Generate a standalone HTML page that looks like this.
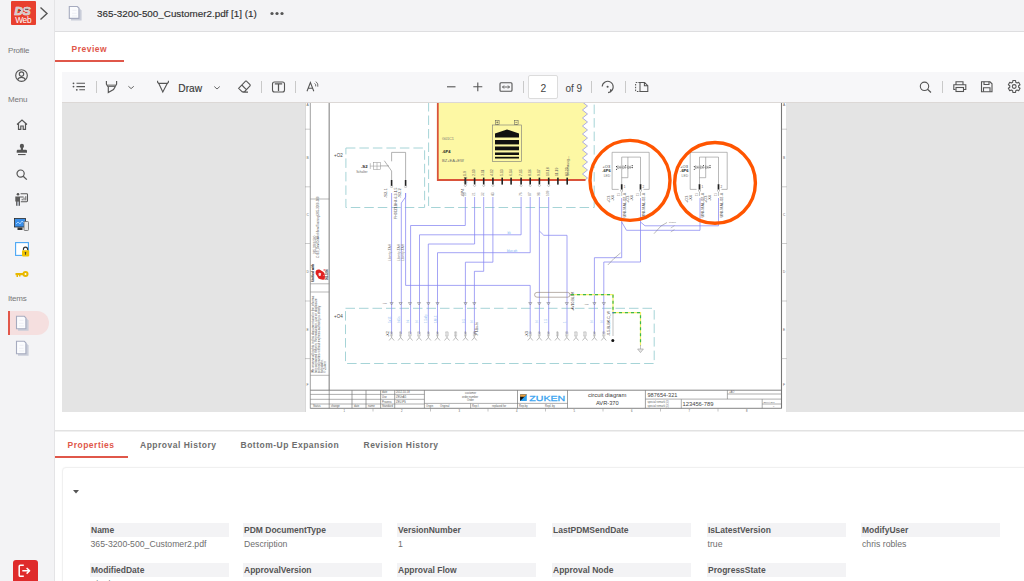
<!DOCTYPE html>
<html><head><meta charset="utf-8">
<style>
*{box-sizing:border-box;margin:0;padding:0}
html,body{width:1024px;height:581px;overflow:hidden;background:#fff;font-family:"Liberation Sans",sans-serif;color:#3a3a3a}
.abs{position:absolute}
#side{left:0;top:0;width:55px;height:581px;background:#f3f3f5;border-right:1px solid #e4e4e6}
.slab{position:absolute;left:8px;font-size:8px;letter-spacing:-0.2px;color:#777}
#hdr{left:55px;top:0;width:969px;height:32px;background:#f3f3f5;border-bottom:1px solid #dedee0}
#ttl{left:97px;top:7.6px;font-size:9.85px;color:#303030;-webkit-text-stroke:0.15px #303030;white-space:nowrap}
.tab{position:absolute;font-size:8.5px;font-weight:700;letter-spacing:0.5px;color:#6e6e6e;white-space:nowrap}
#tb{left:62px;top:72px;width:962px;height:31px;background:#f7f7f9;border-bottom:1px solid #dcd8d6}
#pdf{left:62px;top:103px;width:962px;height:309px;background:#e4e4e4;overflow:hidden}
.sep{position:absolute;width:1px;height:12px;top:81px;background:#c9c9c9}
.lbl{position:absolute;height:14px;width:139px;background:#f3f3f5;font-size:8.5px;font-weight:700;color:#555;padding-left:1px;line-height:14px}
.val{position:absolute;font-size:8.7px;color:#6e6e6e;white-space:nowrap}
svg{position:absolute;overflow:visible}
</style></head><body>

<!-- sidebar -->
<div id="side" class="abs">
  <div class="abs" style="left:11px;top:1px;width:25px;height:24px;background:#e8402f;border-radius:1px"></div>
  <svg style="left:11px;top:1px" width="25" height="24" viewBox="0 0 25 24">
    <text x="3.4" y="14" font-family="Liberation Sans" font-weight="700" font-style="italic" font-size="11.8" fill="#cfcfcf" stroke="#f2f2f2" stroke-width="0.7" paint-order="stroke" letter-spacing="-0.2">DS</text>
    <path d="M7.2 9.5 H10 M14 8.3 H17.3" stroke="#555" stroke-width="1"/>
    <text x="4.2" y="22.3" font-family="Liberation Sans" font-size="8.3" fill="#fff" letter-spacing="-0.3">Web</text>
  </svg>
  <svg style="left:39px;top:6px" width="10" height="15" viewBox="0 0 10 15"><path d="M1.5 1.5 L8 7.5 L1.5 13.5" fill="none" stroke="#555" stroke-width="1.4"/></svg>

  <div class="slab" style="top:46px">Profile</div>
  <svg style="left:15px;top:69px" width="13" height="13" viewBox="0 0 13 13"><circle cx="6.5" cy="6.5" r="5.8" fill="none" stroke="#555" stroke-width="1.15"/><circle cx="6.5" cy="5.1" r="2.2" fill="none" stroke="#555" stroke-width="1.15"/><path d="M2.6 10.8 Q3.5 8.3 6.5 8.3 Q9.5 8.3 10.4 10.8" fill="none" stroke="#555" stroke-width="1.15"/></svg>
  <div class="slab" style="top:95px">Menu</div>
  <svg style="left:16px;top:119px" width="12" height="11" viewBox="0 0 12 11"><path d="M1 5.5 L6 1 L11 5.5 M2.5 4.5 V10.3 H4.8 V7 H7.2 V10.3 H9.5 V4.5" fill="none" stroke="#555" stroke-width="1.2"/></svg>
  <svg style="left:15px;top:142px" width="14" height="15" viewBox="15 142 14 15"><path d="M21.9 143.8 Q24 143.8 24 146 Q24 147.3 23 148 V149.8 H25.8 Q27 149.8 27 151 V152.8 H16.7 V151 Q16.7 149.8 17.9 149.8 H20.8 V148 Q19.8 147.3 19.8 146 Q19.8 143.8 21.9 143.8 Z" fill="#555"/><rect x="18" y="154" width="7.6" height="1.1" fill="#555"/></svg>
  <svg style="left:16px;top:169px" width="12" height="11" viewBox="0 0 12 11"><circle cx="4.6" cy="4.6" r="3.6" fill="none" stroke="#555" stroke-width="1.2"/><path d="M7.2 7.2 L10.8 10.6" stroke="#555" stroke-width="1.3"/></svg>
  <svg style="left:13px;top:190px" width="17" height="17" viewBox="13 190 17 17"><circle cx="18" cy="194.2" r="1.3" fill="#555"/><path d="M15.3 196.4 H23.6 V197.6 H20 V205.7 H18.5 V201.5 H17.6 V205.7 H16.1 V201.5 H15.3 Z" fill="#5a5a5a"/><rect x="17.6" y="202" width="0.9" height="3.5" fill="#b8c4d8"/><path d="M20.6 193.7 H26.6 Q27.5 193.7 27.5 194.6 V200.8 Q27.5 201.7 26.6 201.7 H20.8" fill="none" stroke="#5a5a5a" stroke-width="1.05"/><path d="M22.2 200.4 V198.8 M24 200.4 V197.6 M25.8 200.4 V196.2" stroke="#5a5a5a" stroke-width="0.95"/></svg>
  <svg style="left:14px;top:218px" width="15" height="13" viewBox="0 0 15 13"><rect x="0.5" y="0.5" width="11" height="8.5" fill="#3a8ee8" stroke="#2a2a2a" stroke-width="0.8"/><path d="M2 6 L4 4 L6 6 L8 3 L10 5" stroke="#bfe0ff" stroke-width="0.8" fill="none"/><rect x="3.5" y="9.5" width="5" height="2.5" fill="#333"/><rect x="10" y="3.5" width="4.5" height="9" rx="0.8" fill="#e6e6e6" stroke="#666" stroke-width="0.8"/></svg>
  <svg style="left:15px;top:242px" width="15" height="16" viewBox="0 0 15 16"><rect x="0.6" y="0.6" width="12.8" height="12.8" fill="#fff" stroke="#4aa6f4" stroke-width="1.1"/><path d="M8.4 8.3 V7.2 A2.1 2.1 0 0 1 12.6 7.2 V8.3" fill="none" stroke="#333" stroke-width="1.1"/><rect x="7" y="8.2" width="7.2" height="6.2" rx="0.8" fill="#f0c400"/><circle cx="10.5" cy="10.8" r="0.8" fill="#333"/><rect x="10.1" y="11" width="0.8" height="1.8" fill="#333"/></svg>
  <svg style="left:15px;top:270px" width="14" height="8" viewBox="0 0 14 8"><circle cx="10.5" cy="4" r="3" fill="#e8b800"/><circle cx="10.5" cy="4" r="1" fill="#fff"/><rect x="0.5" y="3" width="8" height="2.2" fill="#e8b800"/><rect x="1.5" y="4.5" width="1.5" height="2.5" fill="#e8b800"/><rect x="4" y="4.5" width="1.5" height="2" fill="#e8b800"/></svg>
  <div class="slab" style="top:294px">Items</div>
  <div class="abs" style="left:8px;top:311px;width:41px;height:24px;background:#f5dfdf;border-radius:0 12px 12px 0"></div>
  <div class="abs" style="left:8px;top:311px;width:2px;height:24px;background:#e2574a"></div>
  <svg style="left:14.5px;top:314.5px" width="16" height="17" viewBox="0 0 16 17"><path d="M3 2.8 H11 L13.6 5.4 V15.8 H3 Z" fill="#c9cdd9"/><path d="M1.5 1.3 H9.3 L10.9 2.9 V13.7 H1.5 Z" fill="#fbfcfe" stroke="#a6abbf" stroke-width="1.1"/><path d="M4.5 5.3 H8.5 M4 8.3 H8.5 M4 11 H9" stroke="#e3e6ee" stroke-width="0.6"/></svg>
  <svg style="left:14.5px;top:339.5px" width="16" height="17" viewBox="0 0 16 17"><path d="M3 2.8 H11 L13.6 5.4 V15.8 H3 Z" fill="#c9cdd9"/><path d="M1.5 1.3 H9.3 L10.9 2.9 V13.7 H1.5 Z" fill="#fbfcfe" stroke="#a6abbf" stroke-width="1.1"/><path d="M4.5 5.3 H8.5 M4 8.3 H8.5 M4 11 H9" stroke="#e3e6ee" stroke-width="0.6"/></svg>
  <div class="abs" style="left:13px;top:560px;width:25px;height:25px;background:#df2b2b;border-radius:3px"></div>
  <svg style="left:13px;top:560px" width="25" height="21" viewBox="0 0 25 21"><path d="M10.8 5.3 H7.3 Q6.2 5.3 6.2 6.4 V15.2 Q6.2 16.3 7.3 16.3 H10.8" fill="none" stroke="#fff" stroke-width="1.5"/><path d="M9.3 10.8 H16.3 M13.6 8 L16.6 10.8 L13.6 13.6" fill="none" stroke="#fff" stroke-width="1.5" stroke-linejoin="round"/></svg>
</div>

<!-- header -->
<div id="hdr" class="abs"></div>
<svg style="left:68px;top:5px" width="16" height="17" viewBox="0 0 16 17"><path d="M3 2.8 H11 L13.6 5.4 V15.6 H3 Z" fill="#c9cdd9"/><path d="M1.3 1.5 H9.3 L10.9 3.1 V13.4 H1.3 Z" fill="#fbfcfe" stroke="#a6abbf" stroke-width="1.1"/><path d="M4.5 5.3 H8.5 M4 8.3 H8.5 M4 11 H9" stroke="#e3e6ee" stroke-width="0.6"/></svg>
<div id="ttl" class="abs">365-3200-500_Customer2.pdf [1] (1)</div>
<svg style="left:270px;top:11px" width="14" height="5" viewBox="0 0 14 5"><circle cx="2" cy="2.5" r="1.6" fill="#555"/><circle cx="7" cy="2.5" r="1.6" fill="#555"/><circle cx="12" cy="2.5" r="1.6" fill="#555"/></svg>

<!-- preview tab -->
<div class="tab" style="left:71.5px;top:44.3px;color:#e0574a">Preview</div>
<div class="abs" style="left:55px;top:60px;width:69px;height:2px;background:#e0574a"></div>

<!-- toolbar -->
<div id="tb" class="abs"></div>
<div class="abs" style="left:178.3px;top:83px;font-size:10.2px;color:#3a3a3a;-webkit-text-stroke:0.15px #3a3a3a">Draw</div>
<div class="abs" style="left:528px;top:75px;width:30px;height:24px;background:#fff;border:1px solid #dcdcdc;border-radius:2px"></div>
<div class="abs" style="left:540.6px;top:82.6px;font-size:10.3px;color:#444">2</div>
<div class="abs" style="left:565.5px;top:83px;font-size:10px;color:#444">of 9</div>
<div class="sep" style="left:95.5px"></div>
<div class="sep" style="left:261px"></div>
<div class="sep" style="left:295px"></div>
<div class="sep" style="left:523px"></div>
<div class="sep" style="left:591px"></div>
<div class="sep" style="left:624.5px"></div>
<div class="sep" style="left:942px"></div>
<!-- toolbar icons -->
<svg style="left:62px;top:72px" width="962" height="30" viewBox="62 72 962 30" fill="none" stroke="#555" stroke-width="1.1">
  <!-- list -->
  <circle cx="73.5" cy="83.3" r="0.9" fill="#555" stroke="none"/><circle cx="73.5" cy="86.6" r="0.9" fill="#555" stroke="none"/><circle cx="76.8" cy="89.8" r="0.9" fill="#555" stroke="none"/>
  <path d="M76.5 83.3 H85 M76.5 86.6 H85 M79.3 89.8 H85"/>
  <!-- highlighter -->
  <rect x="107.2" y="84.3" width="8.6" height="2.3" fill="#a8a8a8" stroke="none"/>
  <path d="M106.4 80.9 V84.2 L107.6 86.2 H115.4 L116.6 84.2 V80.9" stroke-width="1.15"/>
  <path d="M108.3 86.8 V92.6 L113.5 89.6 L115 87 V86.4" stroke-width="1.15"/>
  <path d="M128.4 86.3 L131.1 88.6 L133.8 86.3" stroke-width="0.9"/>
  <!-- draw -->
  <path d="M157.6 80.8 V82.2 L158.6 83.4 H167.4 L168.4 82.2 V80.8"/>
  <path d="M158.8 83.6 L162.8 92.1 L167.2 83.6"/>
  <path d="M214.3 86.5 L217 89 L219.8 86.5" stroke-width="0.9"/>
  <!-- eraser -->
  <path d="M238.6 88.3 L245.3 81.3 Q246 80.8 246.7 81.3 L250 84.6 Q250.5 85.3 250 86 L244.3 91.9 H242.3 Z M241.8 85 L246.6 89.8 M243 92.1 H248"/>
  <!-- textbox -->
  <rect x="272.5" y="82" width="12" height="10" rx="2"/>
  <path d="M274.8 83.8 H282.2 M278.5 83.8 V91" stroke-width="1.25"/>
  <!-- read aloud -->
  <path d="M307 91.3 L310.4 82.5 L313.8 91.3 M308.2 88.2 H312.6" stroke-width="1.05"/>
  <path d="M314.6 83.4 Q316.2 84.5 315.7 86.4 M315.9 81.6 Q318.6 83.6 317.8 86.7" stroke-width="0.85"/>
  <!-- minus plus -->
  <path d="M447 86.8 H455.5"/>
  <path d="M473.3 86.8 H482.3 M477.8 82.5 V91.3"/>
  <!-- fit -->
  <rect x="500" y="82.8" width="12" height="8.5" rx="1"/>
  <path d="M502.5 87 H509.5 M504 85.5 L502.5 87 L504 88.5 M508 85.5 L509.5 87 L508 88.5" stroke-width="0.9"/>
  <!-- rotate -->
  <path d="M602.2 86.6 A5.5 5.5 0 1 1 610.4 91.6" stroke-width="1.1"/>
  <path d="M608.1 92.6 L610.6 91.9 L610.6 89.3" stroke-width="1.1"/>
  <circle cx="607.6" cy="86.7" r="1.05" fill="#555" stroke="none"/>
  <!-- two page -->
  <path d="M640 82.4 H644.6 L647.8 85.6 V91.4 H640 Z M644.4 82.6 V85.8 H647.6" stroke-width="1.05"/>
  <path d="M640 82.4 H636.6 Q635.6 82.4 635.6 83.4 V90.4 Q635.6 91.4 636.6 91.4 H640" stroke-dasharray="1.6 1.1" stroke-width="1.05"/>
  <!-- search -->
  <circle cx="924.5" cy="86.3" r="4.2"/>
  <path d="M927.5 89.3 L931 92.5" stroke-width="1.2"/>
  <!-- print -->
  <path d="M956 84.5 V81.8 H963 V84.5 M955.5 89.5 H953.8 V84.8 H965.8 V89.5 H963.5"/>
  <rect x="956" y="87.5" width="7.5" height="4" />
  <!-- save -->
  <path d="M981.5 81.8 H990 L992 83.8 V91.8 H981.5 Z"/>
  <path d="M984 81.8 V84.5 H989 V81.8 M983.5 91.8 V87.8 H990 V91.8"/>
  <!-- gear -->
  <path d="M1012.83 80.56 L1015.57 80.56 L1015.74 82.27 L1017.09 83.05 L1018.66 82.34 L1020.03 84.72 L1018.63 85.72 L1018.63 87.28 L1020.03 88.28 L1018.66 90.66 L1017.09 89.95 L1015.74 90.73 L1015.57 92.44 L1012.83 92.44 L1012.66 90.73 L1011.31 89.95 L1009.74 90.66 L1008.37 88.28 L1009.77 87.28 L1009.77 85.72 L1008.37 84.72 L1009.74 82.34 L1011.31 83.05 L1012.66 82.27 Z" stroke-width="1.1" stroke-linejoin="round"/>
  <circle cx="1014.2" cy="86.5" r="1.9" stroke-width="1.1"/>
</svg>

<!-- pdf viewer -->
<div id="pdf" class="abs"></div>
<div class="abs" style="left:305px;top:103px;width:482px;height:309px;background:#fff;border-left:1px solid #d8d8d8"></div>
<svg id="sch" style="left:305px;top:103px;overflow:hidden" width="482" height="309" viewBox="305 103 482 309">
<path d="M437.8 102 H582.5 L587.5 106 L582.5 110 L587.5 114 L582.5 118 L587.5 122 L582.5 126 L587.5 130 L582.5 134 L587.5 138 L582.5 142 L587.5 146 L582.5 150 L587.5 154 L582.5 158 L587.5 162 L582.5 166 L587.5 170 L582.5 174 L587.5 178 L584 180 H437.8 Z" fill="#fdf8a4" stroke="none"/>
<path d="M582.5 102 L587.5 106 L582.5 110 L587.5 114 L582.5 118 L587.5 122 L582.5 126 L587.5 130 L582.5 134 L587.5 138 L582.5 142 L587.5 146 L582.5 150 L587.5 154 L582.5 158 L587.5 162 L582.5 166 L587.5 170 L582.5 174 L587.5 178 L585 180" stroke="#8a8ae8" stroke-width="0.7" fill="none" />
<path d="M437.8 102 V180 H585.5" stroke="#d9533a" stroke-width="1.8" fill="none" />
<rect x="492.3" y="125" width="29.3" height="36.6" fill="none" stroke="#777" stroke-width="0.6"/>
<rect x="495.5" y="120.5" width="3.6" height="3.8" fill="none" stroke="#555" stroke-width="0.5"/>
<rect x="514.5" y="120.5" width="3.6" height="3.8" fill="none" stroke="#555" stroke-width="0.5"/>
<path d="M496.3 122.4 H498.3 M497.3 121.4 V123.4 M515.3 122.4 H517.3" stroke="#333" stroke-width="0.45" fill="none" />
<path d="M497.3 124.3 V125 M516.3 124.3 V125" stroke="#555" stroke-width="0.5" fill="none" />
<path d="M495 133.5 L507 129.5 L519 133.5 V137.5 H495 Z" fill="#111"/>
<rect x="495" y="140" width="24" height="4.4" fill="#111"/>
<rect x="495" y="146.5" width="24" height="3.8" fill="#111"/>
<rect x="495" y="152.5" width="24" height="2.5" fill="#111"/>
<rect x="495" y="156.8" width="24" height="1.7" fill="#111"/>
<text x="442" y="139.5" font-size="3.78" fill="#777" font-family="Liberation Sans" >G01C1</text>
<text x="442" y="153" font-size="4.05" fill="#222" font-family="Liberation Sans" font-weight="700">-6P4</text>
<text x="442" y="162" font-size="4.05" fill="#666" font-family="Liberation Sans" >BZ+EA+EW</text>
<rect x="464.5" y="177.6" width="1.6" height="7" fill="#222"/>
<text transform="translate(465.8,176) rotate(-90)" font-size="3.51" fill="#555" font-family="Liberation Sans">1.9</text>
<path d="M464.1 185.6 L465.3 184.6 L466.5 185.6 L465.3 186.8 Z" fill="#fff" stroke="#777" stroke-width="0.4"/>
<text transform="translate(466.0,196) rotate(-90)" font-size="3.24" fill="#888" font-family="Liberation Sans">10</text>
<rect x="473.8" y="177.6" width="1.6" height="7" fill="#222"/>
<text transform="translate(475.1,176) rotate(-90)" font-size="3.51" fill="#555" font-family="Liberation Sans">2.10</text>
<path d="M473.40000000000003 185.6 L474.6 184.6 L475.8 185.6 L474.6 186.8 Z" fill="#fff" stroke="#777" stroke-width="0.4"/>
<text transform="translate(475.3,196) rotate(-90)" font-size="3.24" fill="#888" font-family="Liberation Sans">21</text>
<rect x="482.9" y="177.6" width="1.6" height="7" fill="#222"/>
<text transform="translate(484.2,176) rotate(-90)" font-size="3.51" fill="#555" font-family="Liberation Sans">3.11</text>
<path d="M482.5 185.6 L483.7 184.6 L484.9 185.6 L483.7 186.8 Z" fill="#fff" stroke="#777" stroke-width="0.4"/>
<text transform="translate(484.4,196) rotate(-90)" font-size="3.24" fill="#888" font-family="Liberation Sans">32</text>
<rect x="492.09999999999997" y="177.6" width="1.6" height="7" fill="#222"/>
<text transform="translate(493.4,176) rotate(-90)" font-size="3.51" fill="#555" font-family="Liberation Sans">4.12</text>
<path d="M491.7 185.6 L492.9 184.6 L494.09999999999997 185.6 L492.9 186.8 Z" fill="#fff" stroke="#777" stroke-width="0.4"/>
<text transform="translate(493.59999999999997,196) rotate(-90)" font-size="3.24" fill="#888" font-family="Liberation Sans">43</text>
<rect x="501.4" y="177.6" width="1.6" height="7" fill="#222"/>
<text transform="translate(502.7,176) rotate(-90)" font-size="3.51" fill="#555" font-family="Liberation Sans">5.13</text>
<rect x="510.3" y="177.6" width="1.6" height="7" fill="#222"/>
<text transform="translate(511.6,176) rotate(-90)" font-size="3.51" fill="#555" font-family="Liberation Sans">6.14</text>
<rect x="520.3000000000001" y="177.6" width="1.6" height="7" fill="#222"/>
<text transform="translate(521.6,176) rotate(-90)" font-size="3.51" fill="#555" font-family="Liberation Sans">7.15</text>
<path d="M519.9 185.6 L521.1 184.6 L522.3000000000001 185.6 L521.1 186.8 Z" fill="#fff" stroke="#777" stroke-width="0.4"/>
<text transform="translate(521.8000000000001,196) rotate(-90)" font-size="3.24" fill="#888" font-family="Liberation Sans">76</text>
<rect x="529.4000000000001" y="177.6" width="1.6" height="7" fill="#222"/>
<text transform="translate(530.7,176) rotate(-90)" font-size="3.51" fill="#555" font-family="Liberation Sans">8.16</text>
<path d="M529.0 185.6 L530.2 184.6 L531.4000000000001 185.6 L530.2 186.8 Z" fill="#fff" stroke="#777" stroke-width="0.4"/>
<text transform="translate(530.9000000000001,196) rotate(-90)" font-size="3.24" fill="#888" font-family="Liberation Sans">87</text>
<rect x="538.6" y="177.6" width="1.6" height="7" fill="#222"/>
<text transform="translate(539.9,176) rotate(-90)" font-size="3.51" fill="#555" font-family="Liberation Sans">9.17</text>
<path d="M538.1999999999999 185.6 L539.4 184.6 L540.6 185.6 L539.4 186.8 Z" fill="#fff" stroke="#777" stroke-width="0.4"/>
<text transform="translate(540.1,196) rotate(-90)" font-size="3.24" fill="#888" font-family="Liberation Sans">98</text>
<rect x="547.9000000000001" y="177.6" width="1.6" height="7" fill="#222"/>
<text transform="translate(549.2,176) rotate(-90)" font-size="3.51" fill="#555" font-family="Liberation Sans">10.18</text>
<path d="M547.5 185.6 L548.7 184.6 L549.9000000000001 185.6 L548.7 186.8 Z" fill="#fff" stroke="#777" stroke-width="0.4"/>
<text transform="translate(549.4000000000001,196) rotate(-90)" font-size="3.24" fill="#888" font-family="Liberation Sans">109</text>
<rect x="557.1" y="177.6" width="1.6" height="7" fill="#222"/>
<text transform="translate(558.4,176) rotate(-90)" font-size="3.51" fill="#555" font-family="Liberation Sans">11.19</text>
<rect x="566.4000000000001" y="177.6" width="1.6" height="7" fill="#222"/>
<text transform="translate(567.7,176) rotate(-90)" font-size="3.51" fill="#555" font-family="Liberation Sans">12.20</text>
<text transform="translate(467,185) rotate(-90)" font-size="4.05" fill="#444" font-family="Liberation Sans">-6P4</text>
<text transform="translate(568.5,176) rotate(-90)" font-size="3.51" fill="#555" font-family="Liberation Sans">Stromausg...</text>
<text transform="translate(464,197) rotate(-90)" font-size="4.05" fill="#555" font-family="Liberation Sans">-6P4</text>
<rect x="345.9" y="148" width="78.7" height="59.5" fill="none" stroke="#9ccfd3" stroke-width="0.9" stroke-dasharray="9.5 4"/>
<path d="M428.6 102 V207.5 H594.2 V102" stroke="#9ccfd3" stroke-width="0.9" fill="none" stroke-dasharray="9.5 4"/>
<rect x="345.5" y="308.3" width="308.7" height="55.2" fill="none" stroke="#9ccfd3" stroke-width="0.9" stroke-dasharray="9.5 4"/>
<text x="334" y="157" font-size="4.59" fill="#444" font-family="Liberation Sans" >+O2</text>
<text x="334" y="317.5" font-size="4.59" fill="#444" font-family="Liberation Sans" >+O4</text>
<path d="M391.6 180 V171 L384.3 160.7 M391.6 161.3 V152.4 H405.6 V180" stroke="#8a8a8a" stroke-width="0.65" fill="none" />
<rect x="373.4" y="162.7" width="7.2" height="6.9" fill="none" stroke="#999" stroke-width="0.55"/>
<path d="M377 162.7 V169.6 M373.4 166.1 H380.6 M370.3 163.2 V169 M370.3 166.1 H373.4" stroke="#999" stroke-width="0.55" fill="none" />
<path d="M380.6 165.9 L388.9 165.9" stroke="#777" stroke-width="0.55" fill="none" />
<text x="367.6" y="167.8" font-size="4.32" fill="#222" font-family="Liberation Sans" font-weight="700" text-anchor="end">-S2</text>
<text x="367.6" y="172.6" font-size="3.1" fill="#666" font-family="Liberation Sans" text-anchor="end">Schalter</text>
<rect x="390.8" y="180" width="1.6" height="6" fill="#222"/>
<path d="M390.40000000000003 186.8 L391.6 185.8 L392.8 186.8 L391.6 188 Z" fill="#fff" stroke="#777" stroke-width="0.4"/>
<rect x="404.8" y="180" width="1.6" height="6" fill="#222"/>
<path d="M404.40000000000003 186.8 L405.6 185.8 L406.8 186.8 L405.6 188 Z" fill="#fff" stroke="#777" stroke-width="0.4"/>
<text transform="translate(387,198) rotate(-90)" font-size="4.05" fill="#444" font-family="Liberation Sans">-S2.1</text>
<text transform="translate(401,198) rotate(-90)" font-size="4.05" fill="#444" font-family="Liberation Sans">-S2.2</text>
<text transform="translate(397,219) rotate(-90)" font-size="3.51" fill="#444" font-family="Liberation Sans">FH07Z1BH4-6.3-1.5</text>
<path d="M391.6 193 V334" stroke="#8585f2" stroke-width="0.75" fill="none" />
<path d="M405.6 193 V197 L401.3 203 V334" stroke="#8585f2" stroke-width="0.75" fill="none" />
<path d="M465.3 197 V225.5 H410.6 V334" stroke="#8585f2" stroke-width="0.75" fill="none" />
<path d="M521.1 197 V234.8 H419.5 V334" stroke="#8585f2" stroke-width="0.75" fill="none" />
<path d="M474.6 197 V244 H428.3 V334" stroke="#8585f2" stroke-width="0.75" fill="none" />
<path d="M530.2 197 V252.7 H437.5 V334" stroke="#8585f2" stroke-width="0.75" fill="none" />
<path d="M492.9 197 V262.2 H465.4 V334" stroke="#8585f2" stroke-width="0.75" fill="none" />
<path d="M483.7 197 V271.3 H474.4 V334" stroke="#8585f2" stroke-width="0.75" fill="none" />
<path d="M405.6 193 V285.4 H530.2 V334" stroke="#8585f2" stroke-width="0.75" fill="none" />
<path d="M539.4 197 V334" stroke="#8585f2" stroke-width="0.75" fill="none" />
<path d="M548.7 197 V334" stroke="#8585f2" stroke-width="0.75" fill="none" />
<path d="M539.4 231 L543.8 235.3 H567 V334" stroke="#8585f2" stroke-width="0.75" fill="none" />
<path d="M621.7 198 V257.7 H594.4 V334" stroke="#8585f2" stroke-width="0.75" fill="none" />
<path d="M640.5 198 V262 H603.8 V334" stroke="#8585f2" stroke-width="0.75" fill="none" />
<path d="M621.7 222 L626.5 230.3 H700 V198" stroke="#8585f2" stroke-width="0.75" fill="none" />
<path d="M640.5 222 L645 225.8 H718.5 V198" stroke="#8585f2" stroke-width="0.75" fill="none" />
<path d="M607.8 265 L614 258.5 L620.5 253" stroke="#777" stroke-width="0.5" fill="none" />
<path d="M654 233.7 L661 226 L667 222.5" stroke="#777" stroke-width="0.5" fill="none" />
<path d="M670.8 228 L674.5 225.6 M670.8 232 L674.5 229.5" stroke="#777" stroke-width="0.4" fill="none" />
<text x="669" y="222.5" font-size="2.43" fill="#777" font-family="Liberation Sans" >strand</text>
<text x="507.5" y="233.8" font-size="2.97" fill="#7ab0f0" font-family="Liberation Sans" >bk</text>
<text x="507" y="252.3" font-size="2.97" fill="#7ab0f0" font-family="Liberation Sans" >blue,wh</text>
<text transform="translate(390.6,261) rotate(-90)" font-size="3.24" fill="#777" font-family="Liberation Sans">Liberty-TAH</text>
<text transform="translate(400.3,261) rotate(-90)" font-size="3.24" fill="#777" font-family="Liberation Sans">Liberty-TAH</text>
<text transform="translate(404.4,261) rotate(-90)" font-size="3.24" fill="#777" font-family="Liberation Sans">Liberty-TAH</text>
<path d="M618.7 189.4 H612.1 V152.3 H649.2 V189.4 H643.5" fill="none" stroke="#8a8a8a" stroke-width="0.6"/>
<path d="M621.7 184.2 V157.1 H640.5 V184.2 M621.7 177.7 H627.9000000000001 V157.1" fill="none" stroke="#8a8a8a" stroke-width="0.6"/>
<path d="M616.2 167.3 H632.7" fill="none" stroke="#777" stroke-width="0.4"/>
<path d="M617.7 165.6 L620.3000000000001 167.3 L617.7 169 Z M620.3000000000001 165.6 V169" fill="none" stroke="#666" stroke-width="0.4"/>
<path d="M622.7 165.6 L625.3000000000001 167.3 L622.7 169 Z M625.3000000000001 165.6 V169" fill="none" stroke="#666" stroke-width="0.4"/>
<path d="M627.7 165.6 L630.3000000000001 167.3 L627.7 169 Z M630.3000000000001 165.6 V169" fill="none" stroke="#666" stroke-width="0.4"/>
<circle cx="616.5" cy="166.5" r="0.55" fill="#222"/><circle cx="616.5" cy="169.2" r="0.55" fill="#222"/><circle cx="632.2" cy="165.6" r="0.55" fill="#222"/><circle cx="632.2" cy="167.6" r="0.55" fill="#222"/><circle cx="625.7" cy="165.5" r="0.5" fill="#222"/>
<text x="602.5" y="168.3" font-size="3.98" fill="#333" font-family="Liberation Sans" >+O3</text>
<text x="602.3000000000001" y="171.6" font-size="3.98" fill="#222" font-family="Liberation Sans" font-weight="700">-6P6</text>
<text x="603.7" y="176.8" font-size="3.38" fill="#777" font-family="Liberation Sans" >LED</text>
<rect x="620.85" y="184.2" width="1.7" height="5.5" fill="#222"/>
<path d="M620.4000000000001 190.8 L621.7 189.6 L623.0 190.8 L621.7 192 Z" fill="#fff" stroke="#777" stroke-width="0.45"/>
<text x="623.7" y="187.5" font-size="2.97" fill="#555" font-family="Liberation Sans" >1</text>
<rect x="639.65" y="184.2" width="1.7" height="5.5" fill="#222"/>
<path d="M639.2 190.8 L640.5 189.6 L641.8 190.8 L640.5 192 Z" fill="#fff" stroke="#777" stroke-width="0.45"/>
<text x="642.5" y="187.5" font-size="2.97" fill="#555" font-family="Liberation Sans" >2</text>
<text transform="translate(610.2,203) rotate(-90)" font-size="3.78" fill="#444" font-family="Liberation Sans">+O3</text>
<text transform="translate(613.7,201) rotate(-90)" font-size="3.78" fill="#444" font-family="Liberation Sans">-X4</text>
<text transform="translate(619.7,196) rotate(-90)" font-size="2.7" fill="#777" font-family="Liberation Sans">11</text>
<text transform="translate(626.0,217.5) rotate(-90)" font-size="3.78" fill="#444" font-family="Liberation Sans">UNI-MAL-02-X</text>
<text transform="translate(629.0,203) rotate(-90)" font-size="3.78" fill="#444" font-family="Liberation Sans">+O3</text>
<text transform="translate(632.5,201) rotate(-90)" font-size="3.78" fill="#444" font-family="Liberation Sans">-X4</text>
<text transform="translate(638.5,196) rotate(-90)" font-size="2.7" fill="#777" font-family="Liberation Sans">11</text>
<text transform="translate(644.8,217.5) rotate(-90)" font-size="3.78" fill="#444" font-family="Liberation Sans">UNI-MAL-02-X</text>
<path d="M621.7 192 V196 M640.5 192 V196" stroke="#8a8a8a" stroke-width="0.5" fill="none" />
<path d="M696.5 189.4 H690.2 V152.3 H727.2 V189.4 H721.5" fill="none" stroke="#8a8a8a" stroke-width="0.6"/>
<path d="M699.5 184.2 V157.1 H718.5 V184.2 M699.5 177.7 H705.7 V157.1" fill="none" stroke="#8a8a8a" stroke-width="0.6"/>
<path d="M694.0 167.3 H710.5" fill="none" stroke="#777" stroke-width="0.4"/>
<path d="M695.5 165.6 L698.1 167.3 L695.5 169 Z M698.1 165.6 V169" fill="none" stroke="#666" stroke-width="0.4"/>
<path d="M700.5 165.6 L703.1 167.3 L700.5 169 Z M703.1 165.6 V169" fill="none" stroke="#666" stroke-width="0.4"/>
<path d="M705.5 165.6 L708.1 167.3 L705.5 169 Z M708.1 165.6 V169" fill="none" stroke="#666" stroke-width="0.4"/>
<circle cx="694.3" cy="166.5" r="0.55" fill="#222"/><circle cx="694.3" cy="169.2" r="0.55" fill="#222"/><circle cx="710.0" cy="165.6" r="0.55" fill="#222"/><circle cx="710.0" cy="167.6" r="0.55" fill="#222"/><circle cx="703.5" cy="165.5" r="0.5" fill="#222"/>
<text x="680.3" y="168.3" font-size="3.98" fill="#333" font-family="Liberation Sans" >+O3</text>
<text x="680.1" y="171.6" font-size="3.98" fill="#222" font-family="Liberation Sans" font-weight="700">-6P6</text>
<text x="681.5" y="176.8" font-size="3.38" fill="#777" font-family="Liberation Sans" >LED</text>
<rect x="698.65" y="184.2" width="1.7" height="5.5" fill="#222"/>
<path d="M698.2 190.8 L699.5 189.6 L700.8 190.8 L699.5 192 Z" fill="#fff" stroke="#777" stroke-width="0.45"/>
<text x="701.5" y="187.5" font-size="2.97" fill="#555" font-family="Liberation Sans" >1</text>
<rect x="717.65" y="184.2" width="1.7" height="5.5" fill="#222"/>
<path d="M717.2 190.8 L718.5 189.6 L719.8 190.8 L718.5 192 Z" fill="#fff" stroke="#777" stroke-width="0.45"/>
<text x="720.5" y="187.5" font-size="2.97" fill="#555" font-family="Liberation Sans" >2</text>
<text transform="translate(688.0,203) rotate(-90)" font-size="3.78" fill="#444" font-family="Liberation Sans">+O3</text>
<text transform="translate(691.5,201) rotate(-90)" font-size="3.78" fill="#444" font-family="Liberation Sans">-X4</text>
<text transform="translate(697.5,196) rotate(-90)" font-size="2.7" fill="#777" font-family="Liberation Sans">11</text>
<text transform="translate(703.8,217.5) rotate(-90)" font-size="3.78" fill="#444" font-family="Liberation Sans">UNI-MAL-02-X</text>
<text transform="translate(707.0,203) rotate(-90)" font-size="3.78" fill="#444" font-family="Liberation Sans">+O3</text>
<text transform="translate(710.5,201) rotate(-90)" font-size="3.78" fill="#444" font-family="Liberation Sans">-X4</text>
<text transform="translate(716.5,196) rotate(-90)" font-size="2.7" fill="#777" font-family="Liberation Sans">11</text>
<text transform="translate(722.8,217.5) rotate(-90)" font-size="3.78" fill="#444" font-family="Liberation Sans">UNI-MAL-02-X</text>
<path d="M699.5 192 V196 M718.5 192 V196" stroke="#8a8a8a" stroke-width="0.5" fill="none" />
<circle cx="630" cy="180.4" r="40" fill="none" stroke="#ff5500" stroke-width="3.4"/>
<circle cx="715" cy="182.9" r="40.4" fill="none" stroke="#ff5500" stroke-width="3.4"/>
<path d="M389.1 340.5 L391.6 337.5 L394.1 340.5 M391.6 337.5 V331.5" stroke="#777" stroke-width="0.5" fill="none" />
<rect x="390.40000000000003" y="332" width="2.4" height="4" fill="none" stroke="#999" stroke-width="0.3"/>
<path d="M398.1 340.5 L400.6 337.5 L403.1 340.5 M400.6 337.5 V331.5" stroke="#777" stroke-width="0.5" fill="none" />
<rect x="399.40000000000003" y="332" width="2.4" height="4" fill="none" stroke="#999" stroke-width="0.3"/>
<path d="M407.5 340.5 L410 337.5 L412.5 340.5 M410 337.5 V331.5" stroke="#777" stroke-width="0.5" fill="none" />
<rect x="408.8" y="332" width="2.4" height="4" fill="none" stroke="#999" stroke-width="0.3"/>
<path d="M416.5 340.5 L419 337.5 L421.5 340.5 M419 337.5 V331.5" stroke="#777" stroke-width="0.5" fill="none" />
<rect x="417.8" y="332" width="2.4" height="4" fill="none" stroke="#999" stroke-width="0.3"/>
<path d="M425.9 340.5 L428.4 337.5 L430.9 340.5 M428.4 337.5 V331.5" stroke="#777" stroke-width="0.5" fill="none" />
<rect x="427.2" y="332" width="2.4" height="4" fill="none" stroke="#999" stroke-width="0.3"/>
<path d="M435.0 340.5 L437.5 337.5 L440.0 340.5 M437.5 337.5 V331.5" stroke="#777" stroke-width="0.5" fill="none" />
<rect x="436.3" y="332" width="2.4" height="4" fill="none" stroke="#999" stroke-width="0.3"/>
<path d="M444.5 340.5 L447 337.5 L449.5 340.5 M447 337.5 V331.5" stroke="#777" stroke-width="0.5" fill="none" />
<rect x="445.8" y="332" width="2.4" height="4" fill="none" stroke="#999" stroke-width="0.3"/>
<path d="M453.2 340.5 L455.7 337.5 L458.2 340.5 M455.7 337.5 V331.5" stroke="#777" stroke-width="0.5" fill="none" />
<rect x="454.5" y="332" width="2.4" height="4" fill="none" stroke="#999" stroke-width="0.3"/>
<path d="M463.0 340.5 L465.5 337.5 L468.0 340.5 M465.5 337.5 V331.5" stroke="#777" stroke-width="0.5" fill="none" />
<rect x="464.3" y="332" width="2.4" height="4" fill="none" stroke="#999" stroke-width="0.3"/>
<path d="M471.8 340.5 L474.3 337.5 L476.8 340.5 M474.3 337.5 V331.5" stroke="#777" stroke-width="0.5" fill="none" />
<rect x="473.1" y="332" width="2.4" height="4" fill="none" stroke="#999" stroke-width="0.3"/>
<path d="M527.8 340.5 L530.3 337.5 L532.8 340.5 M530.3 337.5 V331.5" stroke="#777" stroke-width="0.5" fill="none" />
<rect x="529.0999999999999" y="332" width="2.4" height="4" fill="none" stroke="#999" stroke-width="0.3"/>
<path d="M536.8 340.5 L539.3 337.5 L541.8 340.5 M539.3 337.5 V331.5" stroke="#777" stroke-width="0.5" fill="none" />
<rect x="538.0999999999999" y="332" width="2.4" height="4" fill="none" stroke="#999" stroke-width="0.3"/>
<path d="M545.9 340.5 L548.4 337.5 L550.9 340.5 M548.4 337.5 V331.5" stroke="#777" stroke-width="0.5" fill="none" />
<rect x="547.1999999999999" y="332" width="2.4" height="4" fill="none" stroke="#999" stroke-width="0.3"/>
<path d="M555.0 340.5 L557.5 337.5 L560.0 340.5 M557.5 337.5 V331.5" stroke="#777" stroke-width="0.5" fill="none" />
<rect x="556.3" y="332" width="2.4" height="4" fill="none" stroke="#999" stroke-width="0.3"/>
<path d="M564.3 340.5 L566.8 337.5 L569.3 340.5 M566.8 337.5 V331.5" stroke="#777" stroke-width="0.5" fill="none" />
<rect x="565.5999999999999" y="332" width="2.4" height="4" fill="none" stroke="#999" stroke-width="0.3"/>
<path d="M573.5 340.5 L576 337.5 L578.5 340.5 M576 337.5 V331.5" stroke="#777" stroke-width="0.5" fill="none" />
<rect x="574.8" y="332" width="2.4" height="4" fill="none" stroke="#999" stroke-width="0.3"/>
<path d="M582.5 340.5 L585 337.5 L587.5 340.5 M585 337.5 V331.5" stroke="#777" stroke-width="0.5" fill="none" />
<rect x="583.8" y="332" width="2.4" height="4" fill="none" stroke="#999" stroke-width="0.3"/>
<path d="M591.9 340.5 L594.4 337.5 L596.9 340.5 M594.4 337.5 V331.5" stroke="#777" stroke-width="0.5" fill="none" />
<rect x="593.1999999999999" y="332" width="2.4" height="4" fill="none" stroke="#999" stroke-width="0.3"/>
<path d="M601.3 340.5 L603.8 337.5 L606.3 340.5 M603.8 337.5 V331.5" stroke="#777" stroke-width="0.5" fill="none" />
<rect x="602.5999999999999" y="332" width="2.4" height="4" fill="none" stroke="#999" stroke-width="0.3"/>
<path d="M390.0 302.5 H393.20000000000005 L391.6 305 Z" stroke="#777" stroke-width="0.5" fill="none" />
<path d="M399.0 302.5 H402.20000000000005 L400.6 305 Z" stroke="#777" stroke-width="0.5" fill="none" />
<path d="M408.4 302.5 H411.6 L410 305 Z" stroke="#777" stroke-width="0.5" fill="none" />
<path d="M417.4 302.5 H420.6 L419 305 Z" stroke="#777" stroke-width="0.5" fill="none" />
<path d="M426.79999999999995 302.5 H430.0 L428.4 305 Z" stroke="#777" stroke-width="0.5" fill="none" />
<path d="M435.9 302.5 H439.1 L437.5 305 Z" stroke="#777" stroke-width="0.5" fill="none" />
<path d="M463.9 302.5 H467.1 L465.5 305 Z" stroke="#777" stroke-width="0.5" fill="none" />
<path d="M472.7 302.5 H475.90000000000003 L474.3 305 Z" stroke="#777" stroke-width="0.5" fill="none" />
<path d="M528.6999999999999 302.5 H531.9 L530.3 305 Z" stroke="#777" stroke-width="0.5" fill="none" />
<path d="M537.6999999999999 302.5 H540.9 L539.3 305 Z" stroke="#777" stroke-width="0.5" fill="none" />
<path d="M546.8 302.5 H550.0 L548.4 305 Z" stroke="#777" stroke-width="0.5" fill="none" />
<path d="M565.1999999999999 302.5 H568.4 L566.8 305 Z" stroke="#777" stroke-width="0.5" fill="none" />
<path d="M592.8 302.5 H596.0 L594.4 305 Z" stroke="#777" stroke-width="0.5" fill="none" />
<path d="M602.1999999999999 302.5 H605.4 L603.8 305 Z" stroke="#777" stroke-width="0.5" fill="none" />
<text x="382" y="304.3" font-size="2.43" fill="#555" font-family="Liberation Sans" >-400</text>
<text x="583.8" y="304.6" font-size="2.43" fill="#555" font-family="Liberation Sans" >-400</text>
<text transform="translate(389,337) rotate(-90)" font-size="3.78" fill="#333" font-family="Liberation Sans">-X2</text>
<text transform="translate(527.5,337) rotate(-90)" font-size="3.78" fill="#333" font-family="Liberation Sans">-X3</text>
<text transform="translate(478,336) rotate(-90)" font-size="3.24" fill="#333" font-family="Liberation Sans">-PT-Bu-hi</text>
<text transform="translate(573.8,311) rotate(-90)" font-size="3.51" fill="#333" font-family="Liberation Sans">-AV10.BLBK</text>
<text transform="translate(609.5,336) rotate(-90)" font-size="3.51" fill="#333" font-family="Liberation Sans">-0.5-BLBK-C_W</text>
<text transform="translate(390.6,323) rotate(-90)" font-size="2.97" fill="#8ab8f0" font-family="Liberation Sans">5x15</text>
<text transform="translate(399.6,323) rotate(-90)" font-size="2.97" fill="#8ab8f0" font-family="Liberation Sans">bk5n</text>
<text transform="translate(409,323) rotate(-90)" font-size="2.97" fill="#8ab8f0" font-family="Liberation Sans">bk</text>
<text transform="translate(418,323) rotate(-90)" font-size="2.97" fill="#8ab8f0" font-family="Liberation Sans">bl</text>
<text transform="translate(427.4,323) rotate(-90)" font-size="2.97" fill="#8ab8f0" font-family="Liberation Sans">1.5x8p</text>
<text transform="translate(436.5,323) rotate(-90)" font-size="2.97" fill="#8ab8f0" font-family="Liberation Sans">180.5</text>
<text transform="translate(464.5,323) rotate(-90)" font-size="2.97" fill="#8ab8f0" font-family="Liberation Sans">0.5</text>
<text transform="translate(473.3,323) rotate(-90)" font-size="2.97" fill="#8ab8f0" font-family="Liberation Sans">bl</text>
<text transform="translate(538.3,323) rotate(-90)" font-size="2.97" fill="#8ab8f0" font-family="Liberation Sans">bl</text>
<text transform="translate(547.4,323) rotate(-90)" font-size="2.97" fill="#8ab8f0" font-family="Liberation Sans">1.5</text>
<text transform="translate(565.8,323) rotate(-90)" font-size="2.97" fill="#8ab8f0" font-family="Liberation Sans">1</text>
<text transform="translate(593.4,323) rotate(-90)" font-size="2.97" fill="#8ab8f0" font-family="Liberation Sans">bl</text>
<text transform="translate(602.8,323) rotate(-90)" font-size="2.97" fill="#8ab8f0" font-family="Liberation Sans">bl</text>
<rect x="534.6" y="292.4" width="35.4" height="4.8" rx="2.4" fill="none" stroke="#8a7a70" stroke-width="0.6"/>
<path d="M570 294.8 L572 294.8" stroke="#555" stroke-width="0.6" fill="none" />
<path d="M571 294.7 H613 V312.7 H640.5 V345.4" fill="none" stroke="#f3ee6a" stroke-width="1.2"/>
<path d="M571 294.7 H613 V312.7 H640.5 V345.4" fill="none" stroke="#3cb84a" stroke-width="1.2" stroke-dasharray="3 3"/>
<path d="M613 312.7 V336" stroke="#999" stroke-width="0.6" fill="none" />
<circle cx="612.8" cy="340.5" r="1.5" fill="#111"/>
<path d="M640.5 345 V349 M637.6 349 H643.4 L640.5 352.6 Z" stroke="#999" stroke-width="0.6" fill="#e8e8e8" />
<circle cx="613" cy="312.7" r="0.8" fill="#3366cc"/>
<path d="M310.3 102 V408.5" stroke="#777" stroke-width="0.7" fill="none" />
<path d="M329.2 102 V390.2" stroke="#999" stroke-width="1.3" fill="none" />
<path d="M781.5 102 V408.5" stroke="#777" stroke-width="1.1" fill="none" />
<path d="M786.8 102 V412" stroke="#bbb" stroke-width="0.6" fill="none" />
<path d="M305 129.2 H310.3" stroke="#999" stroke-width="0.5" fill="none" />
<path d="M781.5 129.2 H786.8" stroke="#999" stroke-width="0.5" fill="none" />
<path d="M305 186.8 H310.3" stroke="#999" stroke-width="0.5" fill="none" />
<path d="M781.5 186.8 H786.8" stroke="#999" stroke-width="0.5" fill="none" />
<path d="M305 243.5 H310.3" stroke="#999" stroke-width="0.5" fill="none" />
<path d="M781.5 243.5 H786.8" stroke="#999" stroke-width="0.5" fill="none" />
<path d="M305 301 H310.3" stroke="#999" stroke-width="0.5" fill="none" />
<path d="M781.5 301 H786.8" stroke="#999" stroke-width="0.5" fill="none" />
<path d="M305 358.6 H310.3" stroke="#999" stroke-width="0.5" fill="none" />
<path d="M781.5 358.6 H786.8" stroke="#999" stroke-width="0.5" fill="none" />
<text x="306.5" y="106" font-size="3.24" fill="#666" font-family="Liberation Sans" >A</text>
<text x="783" y="106" font-size="3.24" fill="#666" font-family="Liberation Sans" >A</text>
<text x="306.5" y="158.5" font-size="3.24" fill="#666" font-family="Liberation Sans" >B</text>
<text x="783" y="158.5" font-size="3.24" fill="#666" font-family="Liberation Sans" >B</text>
<text x="306.5" y="216" font-size="3.24" fill="#666" font-family="Liberation Sans" >C</text>
<text x="783" y="216" font-size="3.24" fill="#666" font-family="Liberation Sans" >C</text>
<text x="306.5" y="273" font-size="3.24" fill="#666" font-family="Liberation Sans" >D</text>
<text x="783" y="273" font-size="3.24" fill="#666" font-family="Liberation Sans" >D</text>
<text x="306.5" y="330.5" font-size="3.24" fill="#666" font-family="Liberation Sans" >E</text>
<text x="783" y="330.5" font-size="3.24" fill="#666" font-family="Liberation Sans" >E</text>
<text x="306.5" y="386" font-size="3.24" fill="#666" font-family="Liberation Sans" >F</text>
<text x="783" y="386" font-size="3.24" fill="#666" font-family="Liberation Sans" >F</text>
<path d="M310.3 199 H329.2" stroke="#888" stroke-width="0.6" fill="none" />
<path d="M310.3 283.8 H329.2" stroke="#888" stroke-width="0.6" fill="none" />
<path d="M310.3 292 H329.2" stroke="#888" stroke-width="0.6" fill="none" />
<path d="M310.3 375.3 H329.2" stroke="#888" stroke-width="0.6" fill="none" />
<text transform="translate(314.2,282) rotate(-90)" font-size="3.24" fill="#222" font-family="Liberation Sans" font-weight="700">Unified with</text>
<text transform="translate(316.2,254) rotate(-90)" font-size="2.97" fill="#555" font-family="Liberation Sans">365-3200-500</text>
<text transform="translate(319,258) rotate(-90)" font-size="2.97" fill="#555" font-family="Liberation Sans">C:\E3_Dev\DsWorkflow\Training\365-3200-500</text>
<text transform="translate(328,280) rotate(-90)" font-size="2.56" fill="#222" font-family="Liberation Sans" font-weight="700">365-3200</text>
<path d="M315.6 271.5 Q316.5 268.8 319.5 269.6 L323.5 272 Q325.3 273.5 325 276.5 L324.6 279.5 Q321 280 318.5 278.5 L316.8 275.5 Q315.2 273.5 315.6 271.5 Z" fill="#e02020"/>
<path d="M318.5 273.2 Q320 272 321.2 273.6 L320.6 276 Q319.3 276.3 318.6 275.2 Z" fill="#fff" opacity="0.85"/>
<path d="M323.2 269.5 L325 268.9 L325.3 270.6 L323.6 271 Z M323.3 275.6 L324.6 275.2" fill="#e02020" stroke="#fff" stroke-width="0.5"/>
<text transform="translate(313.5,373) rotate(-90)" font-size="3.1" fill="#555" font-family="Liberation Sans">We reserve all rights in this document and in the informa</text>
<text transform="translate(316.5,373) rotate(-90)" font-size="3.1" fill="#555" font-family="Liberation Sans">tion contained therein. Reproduction, use or disclosure</text>
<text transform="translate(319.5,373) rotate(-90)" font-size="3.1" fill="#555" font-family="Liberation Sans">to third parties without express authority is strictly</text>
<text transform="translate(322.5,373) rotate(-90)" font-size="3.1" fill="#555" font-family="Liberation Sans">forbidden.</text>
<text transform="translate(325.5,373) rotate(-90)" font-size="3.1" fill="#555" font-family="Liberation Sans">© Zuken</text>
<path d="M310.3 390.2 H781.5 M310.3 408.3 H781.5" stroke="#777" stroke-width="0.9" fill="none" />
<path d="M310.3 394.4 H424.4" stroke="#777" stroke-width="0.6" fill="none" />
<path d="M310.3 399.3 H424.4" stroke="#777" stroke-width="0.6" fill="none" />
<path d="M310.3 404 H424.4" stroke="#777" stroke-width="0.6" fill="none" />
<path d="M329.2 390.2 V408.3" stroke="#777" stroke-width="0.7" fill="none" />
<path d="M352 390.2 V408.3" stroke="#777" stroke-width="0.7" fill="none" />
<path d="M366 390.2 V408.3" stroke="#777" stroke-width="0.7" fill="none" />
<path d="M380.6 390.2 V408.3" stroke="#777" stroke-width="0.7" fill="none" />
<path d="M394.7 390.2 V408.3" stroke="#777" stroke-width="0.7" fill="none" />
<path d="M424.4 390.2 V408.3" stroke="#777" stroke-width="0.7" fill="none" />
<path d="M517.5 390.2 V408.3" stroke="#777" stroke-width="0.7" fill="none" />
<path d="M567.5 390.2 V408.3" stroke="#777" stroke-width="0.7" fill="none" />
<path d="M645.4 390.2 V408.3" stroke="#777" stroke-width="0.7" fill="none" />
<path d="M424.4 403.4 H567.5 M470.6 403.4 V408.3" stroke="#777" stroke-width="0.6" fill="none" />
<path d="M645.4 399.1 H781.5 M727.4 390.2 V399.1 M727.4 394 H781.5 M681.3 399.1 V408.3 M762.2 399.1 V408.3 M762.2 404 H781.5" stroke="#777" stroke-width="0.6" fill="none" />
<text x="382" y="393.3" font-size="2.7" fill="#555" font-family="Liberation Sans" >date</text>
<text x="396" y="393.3" font-size="2.7" fill="#555" font-family="Liberation Sans" >2012-10-18</text>
<text x="382" y="397.8" font-size="2.7" fill="#555" font-family="Liberation Sans" >Use</text>
<text x="396" y="397.8" font-size="2.7" fill="#555" font-family="Liberation Sans" >ZEUnA5</text>
<text x="382" y="402.5" font-size="2.7" fill="#555" font-family="Liberation Sans" >Prozess</text>
<text x="396" y="402.5" font-size="2.7" fill="#555" font-family="Liberation Sans" >ZEU-PS</text>
<text x="382" y="407" font-size="2.7" fill="#555" font-family="Liberation Sans" >Standard</text>
<text x="313" y="407" font-size="2.7" fill="#555" font-family="Liberation Sans" >Status</text>
<text x="331" y="407" font-size="2.7" fill="#555" font-family="Liberation Sans" >change</text>
<text x="354" y="407" font-size="2.7" fill="#555" font-family="Liberation Sans" >date</text>
<text x="368" y="407" font-size="2.7" fill="#555" font-family="Liberation Sans" >name</text>
<text x="426" y="407" font-size="2.7" fill="#555" font-family="Liberation Sans" >Origin</text>
<text x="440" y="407" font-size="2.7" fill="#555" font-family="Liberation Sans" >Original</text>
<text x="472" y="407" font-size="2.7" fill="#555" font-family="Liberation Sans" >Rep.f.</text>
<text x="492" y="407" font-size="2.7" fill="#555" font-family="Liberation Sans" >replaced for</text>
<text x="519" y="407" font-size="2.7" fill="#555" font-family="Liberation Sans" >Rep.by</text>
<text x="545" y="407" font-size="2.7" fill="#555" font-family="Liberation Sans" >Repl. by</text>
<text x="465" y="393.8" font-size="2.7" fill="#555" font-family="Liberation Sans" >customer</text>
<text x="462" y="397.6" font-size="2.7" fill="#555" font-family="Liberation Sans" >order number</text>
<text x="467" y="401.4" font-size="2.7" fill="#555" font-family="Liberation Sans" >Order</text>
<text x="588" y="397.3" font-size="5.9" fill="#3a3a3a" font-family="Liberation Sans" >circuit diagram</text>
<text x="596" y="404.8" font-size="5.7" fill="#3a3a3a" font-family="Liberation Sans" >AVR-370</text>
<text x="647.5" y="397.3" font-size="5.6" fill="#444" font-family="Liberation Sans" >987654-321</text>
<text x="682.5" y="406.2" font-size="5.8" fill="#444" font-family="Liberation Sans" >123456-789</text>
<text x="647.5" y="402.5" font-size="2.7" fill="#666" font-family="Liberation Sans" >special remark (1)</text>
<text x="647.5" y="406.8" font-size="2.7" fill="#666" font-family="Liberation Sans" >special remark (2)</text>
<text x="729" y="393" font-size="2.7" fill="#666" font-family="Liberation Sans" >+AO</text>
<text x="763.5" y="403" font-size="2.43" fill="#666" font-family="Liberation Sans" >Sheet   201</text>
<text x="773" y="407" font-size="2.43" fill="#666" font-family="Liberation Sans" >9</text>
<path d="M520.1 394.6 H526.8 V401 H520.1 Z" fill="#2ea0ee"/><path d="M520.1 394.6 H526.8 L520.1 401 Z" fill="#111"/><path d="M520.1 394.6 H526.8 L524.5 396.8 H520.1 Z" fill="#e8a040"/>
<text transform="translate(529.3,400.9) scale(1.36,1)" font-size="7.8" fill="#35a2f0" stroke="#35a2f0" stroke-width="0.25" font-family="Liberation Sans" font-weight="400">ZUKEN</text>
<text x="343.5" y="412.3" font-size="2.7" fill="#555" font-family="Liberation Sans" >1</text>
<text x="401.0" y="412.3" font-size="2.7" fill="#555" font-family="Liberation Sans" >2</text>
<text x="458.5" y="412.3" font-size="2.7" fill="#555" font-family="Liberation Sans" >3</text>
<text x="516.0" y="412.3" font-size="2.7" fill="#555" font-family="Liberation Sans" >4</text>
<text x="573.5" y="412.3" font-size="2.7" fill="#555" font-family="Liberation Sans" >5</text>
<text x="631.0" y="412.3" font-size="2.7" fill="#555" font-family="Liberation Sans" >6</text>
<text x="688.5" y="412.3" font-size="2.7" fill="#555" font-family="Liberation Sans" >7</text>
<text x="746.0" y="412.3" font-size="2.7" fill="#555" font-family="Liberation Sans" >8</text>
<path d="M373.0 408.3 V411.5" stroke="#888" stroke-width="0.5" fill="none" />
<path d="M430.5 408.3 V411.5" stroke="#888" stroke-width="0.5" fill="none" />
<path d="M488.0 408.3 V411.5" stroke="#888" stroke-width="0.5" fill="none" />
<path d="M545.5 408.3 V411.5" stroke="#888" stroke-width="0.5" fill="none" />
<path d="M603.0 408.3 V411.5" stroke="#888" stroke-width="0.5" fill="none" />
<path d="M660.5 408.3 V411.5" stroke="#888" stroke-width="0.5" fill="none" />
<path d="M718.0 408.3 V411.5" stroke="#888" stroke-width="0.5" fill="none" />
</svg>

<!-- bottom panel -->
<div class="abs" style="left:55px;top:430px;width:969px;height:1px;background:#e2e2e2"></div>
<div class="abs" style="left:55px;top:431px;width:969px;height:1px;background:#f0f0f0"></div>
<div class="tab" style="left:67.5px;top:440px;color:#e0574a">Properties</div>
<div class="tab" style="left:140px;top:440px">Approval History</div>
<div class="tab" style="left:240.5px;top:440px">Bottom-Up Expansion</div>
<div class="tab" style="left:363.5px;top:440px">Revision History</div>
<div class="abs" style="left:55px;top:456px;width:73px;height:2px;background:#e0574a"></div>

<div class="abs" style="left:62px;top:467px;width:980px;height:130px;background:#fff;border:1px solid #f0f0f0;border-radius:4px;box-shadow:0 0 2px rgba(0,0,0,0.04)"></div>
<svg style="left:73px;top:490px" width="7" height="4" viewBox="0 0 7 4"><path d="M0 0 H6 L3 3.5 Z" fill="#555"/></svg>

<div class="lbl" style="left:90px;top:523px">Name</div>
<div class="lbl" style="left:243px;top:523px">PDM DocumentType</div>
<div class="lbl" style="left:397px;top:523px">VersionNumber</div>
<div class="lbl" style="left:552px;top:523px">LastPDMSendDate</div>
<div class="lbl" style="left:707px;top:523px">IsLatestVersion</div>
<div class="lbl" style="left:861px;top:523px">ModifyUser</div>
<div class="val" style="left:90.5px;top:539px">365-3200-500_Customer2.pdf</div>
<div class="val" style="left:244px;top:539px">Description</div>
<div class="val" style="left:398px;top:539px">1</div>
<div class="val" style="left:707.5px;top:539px">true</div>
<div class="val" style="left:862px;top:539px">chris robles</div>
<div class="lbl" style="left:90px;top:563px">ModifiedDate</div>
<div class="lbl" style="left:243px;top:563px">ApprovalVersion</div>
<div class="lbl" style="left:397px;top:563px">Approval Flow</div>
<div class="lbl" style="left:552px;top:563px">Approval Node</div>
<div class="lbl" style="left:707px;top:563px">ProgressState</div>
<div class="val" style="left:90.5px;top:579px">4/17/2024 10:41:16 AM</div>
<div class="val" style="left:244px;top:579px">1</div>

</body></html>
